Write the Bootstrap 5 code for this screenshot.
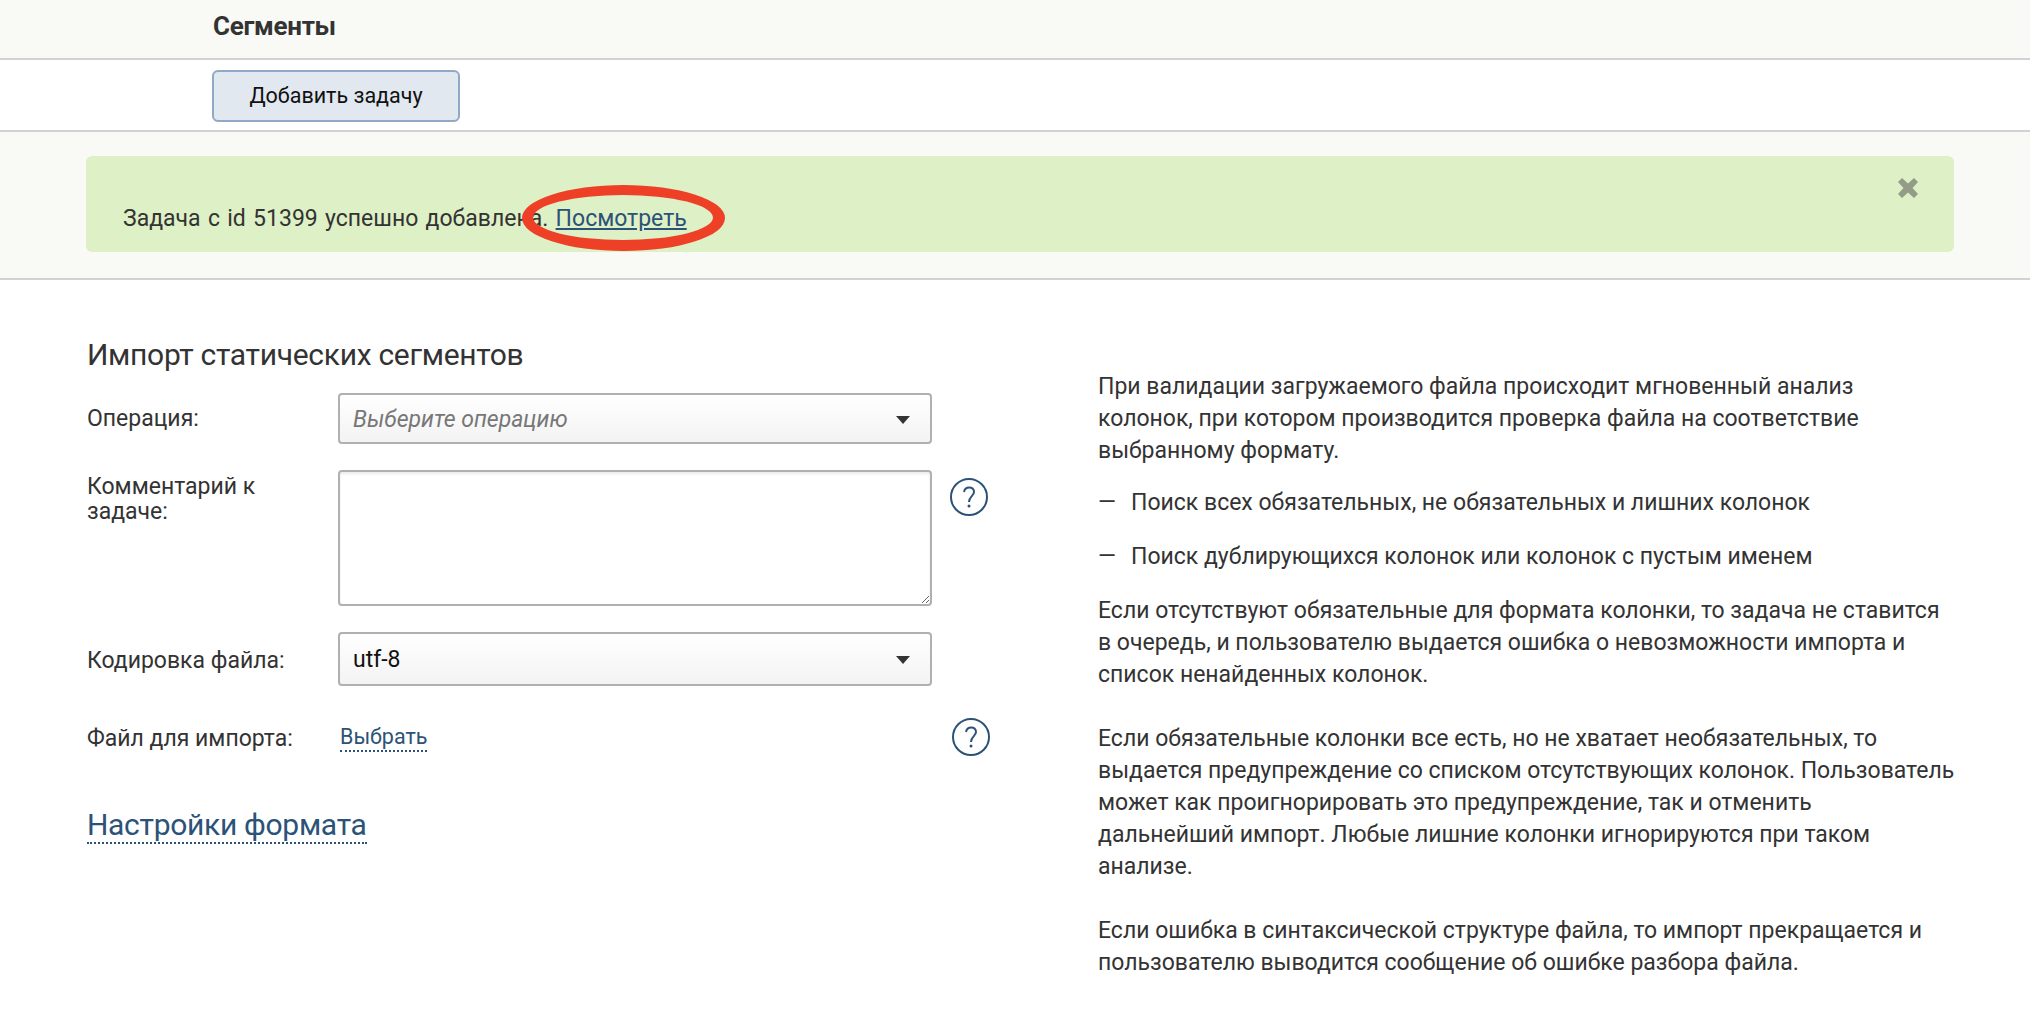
<!DOCTYPE html>
<html lang="ru">
<head>
  <meta charset="UTF-8" />
  <title>Сегменты</title>
  <link href="https://cdn.jsdelivr.net/npm/bootstrap@5.3.3/dist/css/bootstrap.min.css" rel="stylesheet">
  <style>
    body {
      font-family: "Roboto", "Liberation Sans", sans-serif;
      font-size: 23px;
      line-height: 32px;
      color: #333;
      background: #fff;
    }
    a { color: #2c5278; }
    .top-bar {
      height: 60px;
      background: #f9faf5;
      border-bottom: 2px solid #d2d2d2;
      padding-left: 213px;
    }
    .top-title { font-size: 26px; font-weight: 700; line-height: 53px; margin: 0; letter-spacing: -0.3px; }
    .tool-bar {
      height: 72px;
      border-bottom: 2px solid #d2d2d2;
      padding: 10px 0 0 212px;
    }
    .add-btn {
      width: 248px;
      height: 52px;
      padding: 0;
      font-size: 21.500px;
      color: #111;
      background: #e2e8ef;
      border: 2px solid #8eaac6;
      border-radius: 6px;
    }
    .notice-wrap {
      height: 148px;
      background: #f9faf5;
      border-bottom: 2px solid #d2d2d2;
      padding: 24px 76px 0 86px;
    }
    .notice-box {
      height: 96px;
      background: #def0c5;
      border-radius: 6px;
      padding: 47px 37px 0;
      word-spacing: 1.600px;
    }
    .notice-close { top: 22px; right: 36px; }
    .red-ring { left: 522px; top: 185px; }
    .page-body { padding: 55px 75px 0 87px; }
    .left-col { width: 903px; }
    .right-col { width: 857px; margin-left: 108px; padding-top: 36px; white-space: nowrap; }
    .form-head { font-size: 30px; font-weight: 400; line-height: 40px; margin: 0 0 18px; color: #333; letter-spacing: -0.3px; }
    .form-line { margin-bottom: 26px; }
    .form-label-own { width: 251px; flex: none; }
    .label-top { padding-top: 10px; }
    .label-two { line-height: 25px; padding-top: 4px; }
    .label-low { padding-top: 13px; }
    .fake-select {
      width: 594px;
      height: 51px;
      padding: 2px 14px 0 13px;
      border: 2px solid #b0b0b0;
      border-radius: 4px;
      background: linear-gradient(#fff, #f3f3f3);
      color: #111;
    }
    .fake-select.is-empty { color: #777; font-style: italic; }
    .fake-select.is-tall { height: 54px; }
    .arrow-down { width: 0; height: 0; border-left: 7px solid transparent; border-right: 7px solid transparent; border-top: 8px solid #333; margin-right: 6px; }
    .big-area {
      width: 594px;
      height: 136px;
      border: 2px solid #b0b0b0;
      border-radius: 4px;
      box-shadow: inset 0 2px 3px rgba(0, 0, 0, .08);
      display: block;
    }
    .help-ico { width: 38px; height: 38px; margin-left: 18px; }
    .file-line { margin-top: 32px; }
    .file-label { padding-top: 4px; }
    .dash-link { color: #2c5278; border-bottom: 2px dotted #2c5278; text-decoration: none; line-height: 26px; display: inline-block; }
    .pick-link { font-size: 21.500px; margin-left: 2px; }
    .format-wrap { margin-top: 52px; }
    .format-link { font-size: 30px; line-height: 34px; letter-spacing: -0.3px; }
    .txt-p { margin: 0 0 20px; }
    .dash-row { margin: 0 0 22px; display: flex; }
    .dash-row span { width: 33px; flex: none; }
  </style>
</head>
<body>
  <div class="top-bar"><h1 class="top-title">Сегменты</h1></div>
  <div class="tool-bar"><button type="button" class="btn add-btn">Добавить задачу</button></div>
  <div class="notice-wrap">
    <div class="notice-box position-relative">
      Задача с id 51399 успешно добавлена. <a href="#">Посмотреть</a>
      <svg class="notice-close position-absolute" width="20" height="20" viewBox="0 0 20 20"><path d="M0 4l4-4 6 5.500 6-5.500 4 4-5.500 6 5.500 6-4 4-6-5.500-6 5.500-4-4 5.500-6z" fill="#929c87"/></svg>
    </div>
  </div>
  <!-- red marker ring drawn over the alert -->
  <svg class="red-ring position-absolute" width="203" height="66" viewBox="0 0 203 66"><path fill-rule="evenodd" fill="#ee4027" d="M0 33a101.500 33 0 1 0 203 0a101.500 33 0 1 0-203 0zM11 32.500a90 22.500 0 1 1 180 0a90 22.500 0 1 1-180 0z"/></svg>

  <div class="page-body d-flex">
    <div class="left-col">
      <h2 class="form-head">Импорт статических сегментов</h2>
      <div class="d-flex form-line">
        <div class="form-label-own label-top">Операция:</div>
        <div class="fake-select is-empty d-flex align-items-center justify-content-between">Выберите операцию<span class="arrow-down"></span></div>
      </div>
      <div class="d-flex form-line">
        <div class="form-label-own label-two">Комментарий к<br>задаче:</div>
        <textarea class="big-area"></textarea>
        <svg class="help-ico mt-2" viewBox="0 0 38 38"><circle cx="19" cy="19" r="18" fill="none" stroke="#2c5278" stroke-width="2"/><path d="M14 14c1-6 10-6 10 0 0 4-5 4.500-5 10" fill="none" stroke="#2c5278" stroke-width="2"/><circle cx="19" cy="28" r="1.500" fill="#2c5278"/></svg>
      </div>
      <div class="d-flex">
        <div class="form-label-own label-low">Кодировка файла:</div>
        <div class="fake-select is-tall d-flex align-items-center justify-content-between">utf-8<span class="arrow-down"></span></div>
      </div>
      <div class="d-flex align-items-center file-line">
        <div class="form-label-own file-label">Файл для импорта:</div>
        <div class="flex-grow-1"><a href="#" class="dash-link pick-link">Выбрать</a></div>
        <svg class="help-ico" viewBox="0 0 38 38"><circle cx="19" cy="19" r="18" fill="none" stroke="#2c5278" stroke-width="2"/><path d="M14 14c1-6 10-6 10 0 0 4-5 4.500-5 10" fill="none" stroke="#2c5278" stroke-width="2"/><circle cx="19" cy="28" r="1.500" fill="#2c5278"/></svg>
      </div>
      <div class="format-wrap"><a href="#" class="dash-link format-link">Настройки формата</a></div>
    </div>
    <div class="right-col">
      <p class="txt-p">При валидации загружаемого файла происходит мгновенный анализ<br>колонок, при котором производится проверка файла на соответствие<br>выбранному формату.</p>
      <div class="dash-row"><span>—</span>Поиск всех обязательных, не обязательных и лишних колонок</div>
      <div class="dash-row"><span>—</span>Поиск дублирующихся колонок или колонок с пустым именем</div>
      <p class="txt-p">Если отсутствуют обязательные для формата колонки, то задача не ставится<br>в очередь, и пользователю выдается ошибка о невозможности импорта и<br>список ненайденных колонок.<br><br>Если обязательные колонки все есть, но не хватает необязательных, то<br>выдается предупреждение со списком отсутствующих колонок. Пользователь<br>может как проигнорировать это предупреждение, так и отменить<br>дальнейший импорт. Любые лишние колонки игнорируются при таком<br>анализе.<br><br>Если ошибка в синтаксической структуре файла, то импорт прекращается и<br>пользователю выводится сообщение об ошибке разбора файла.</p>
    </div>
  </div>
  <script src="https://cdn.jsdelivr.net/npm/bootstrap@5.3.3/dist/js/bootstrap.bundle.min.js"></script>
</body>
</html>
